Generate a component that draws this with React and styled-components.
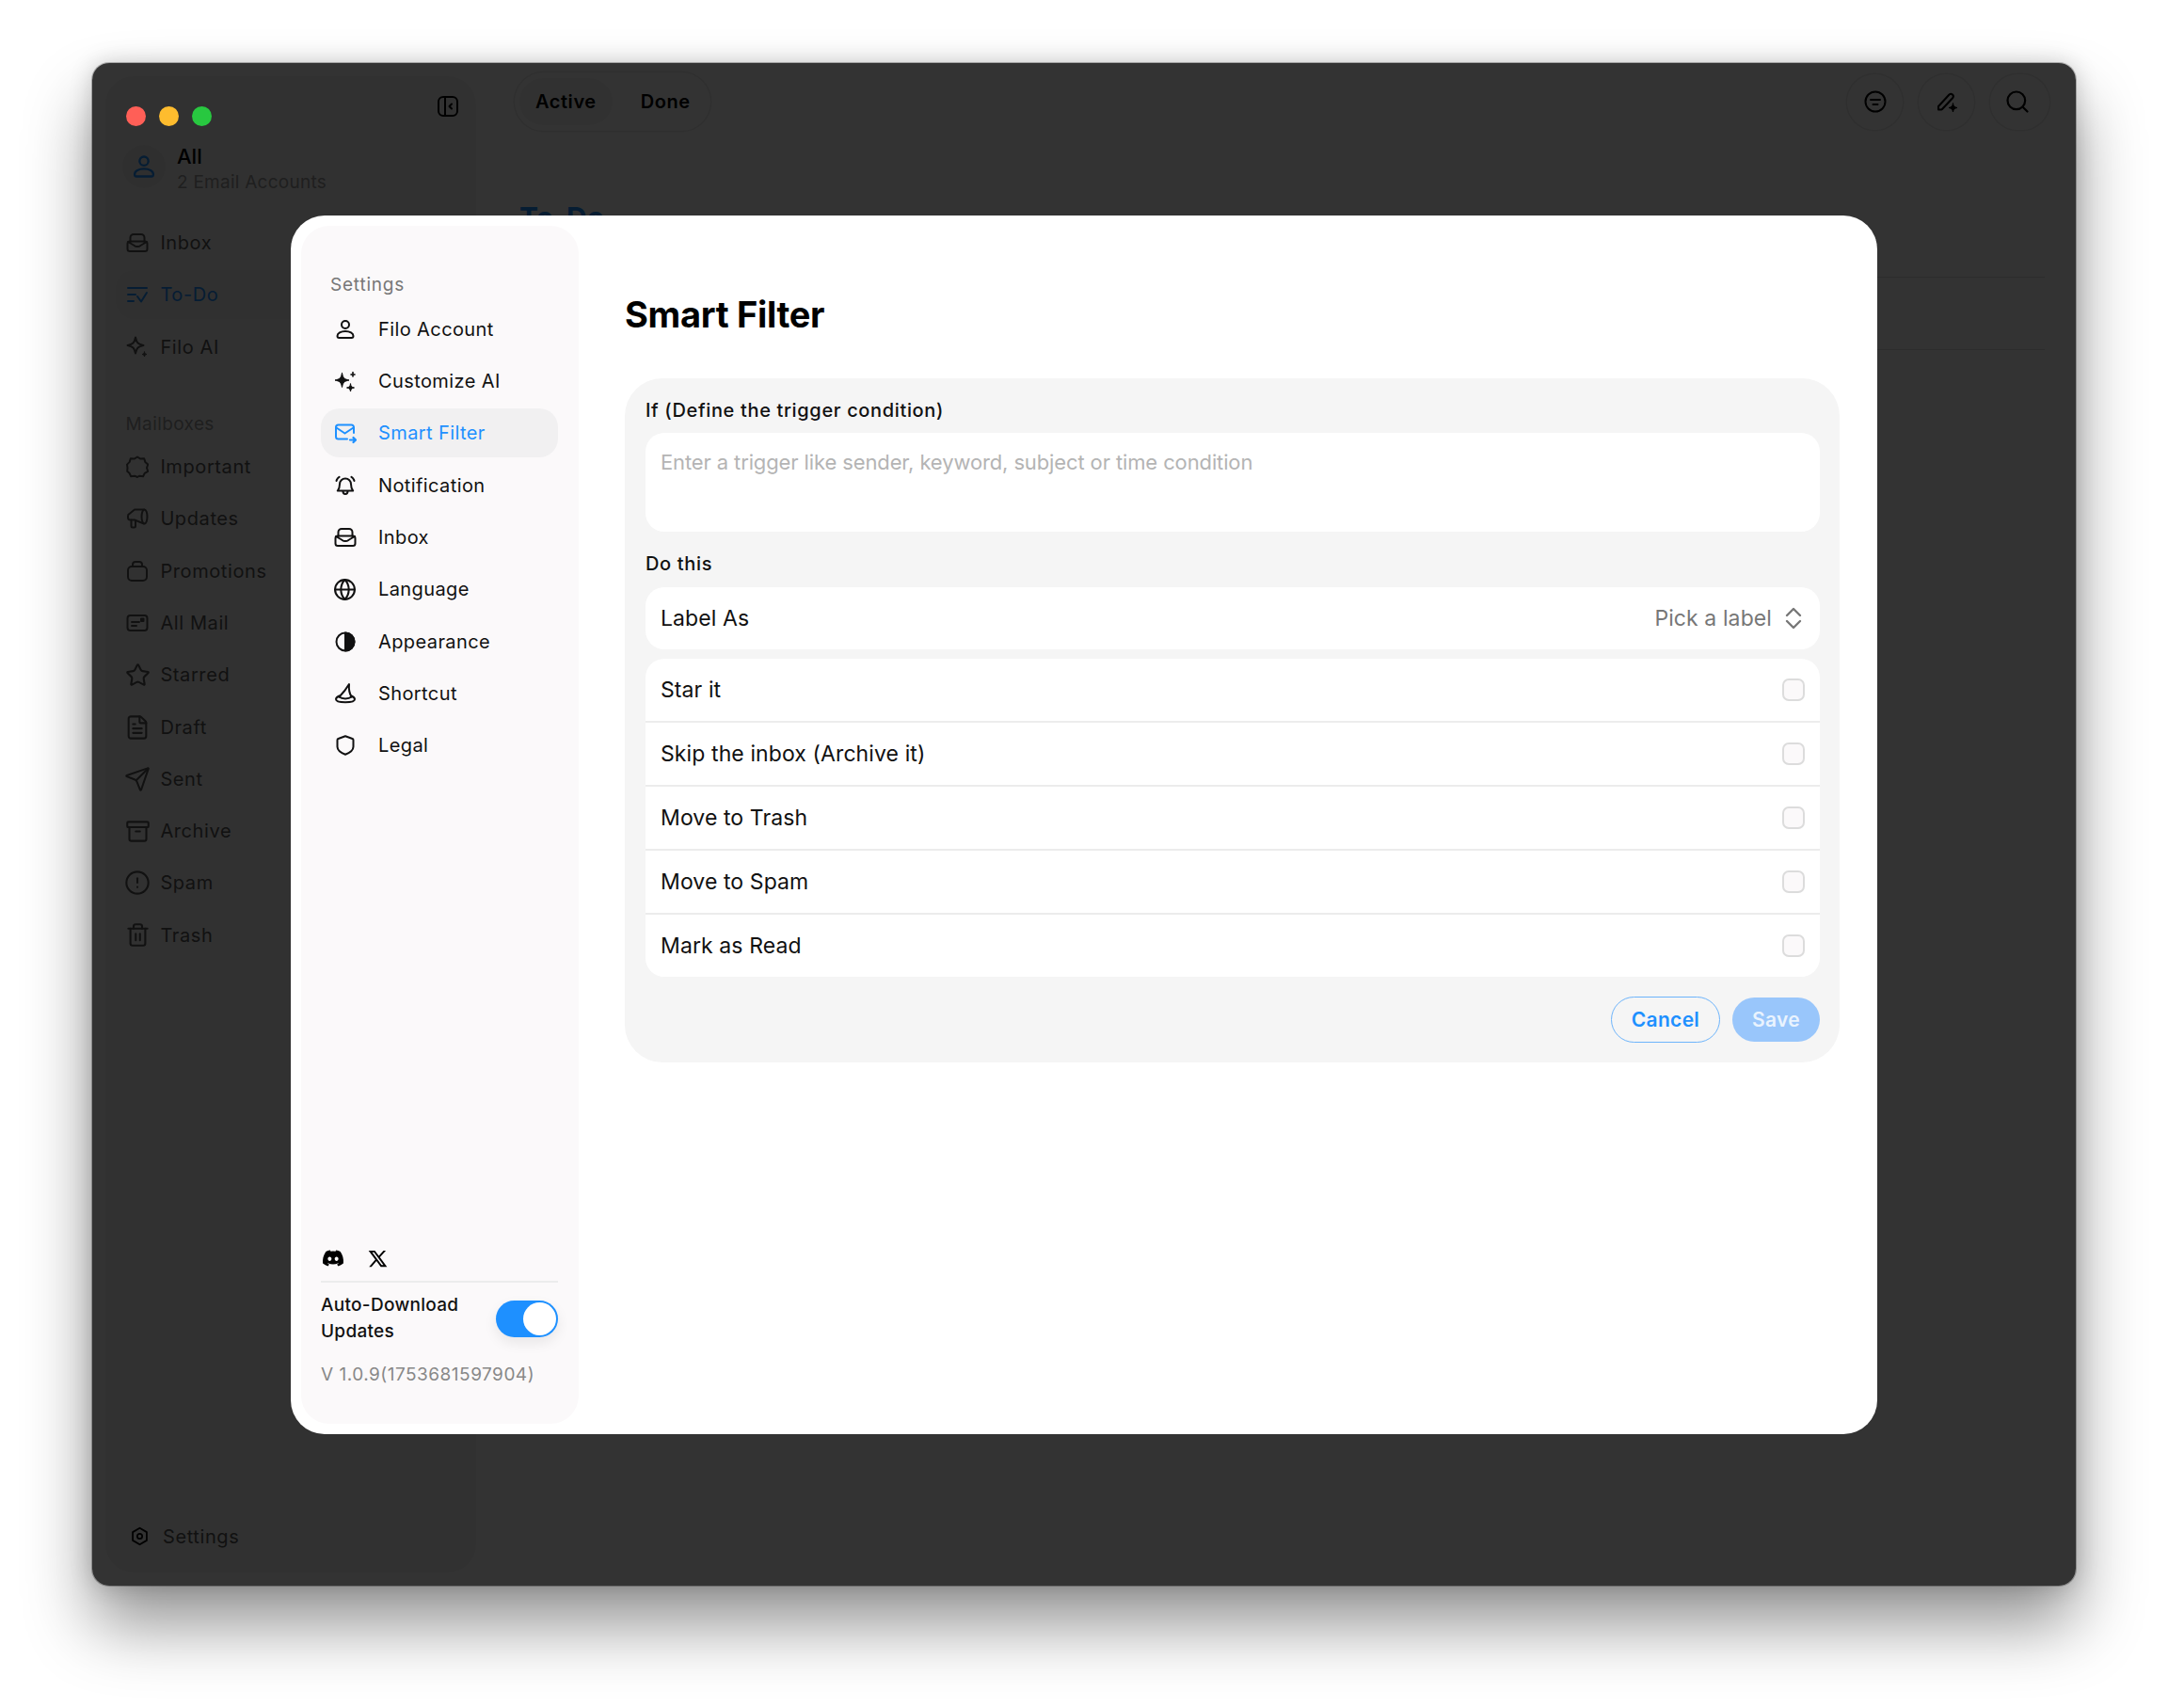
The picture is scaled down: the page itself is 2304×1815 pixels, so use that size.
import React from 'react';
import styled, { createGlobalStyle } from 'styled-components';
import { FaDiscord } from 'react-icons/fa6';
import { RiTwitterXLine } from 'react-icons/ri';
import { Star, FileText, Send, Archive, CircleAlert, Trash2, Search, Globe } from 'lucide-react';

const GlobalStyle = createGlobalStyle`
  html, body {
    margin: 0;
    padding: 0;
    background: #fff;
    font-family: Inter, 'Liberation Sans', sans-serif;
    -webkit-font-smoothing: antialiased;
  }
  * { box-sizing: border-box; }
`;

const Svg = ({ children, size = 24, fill = 'none', sw = 2 }) => (
  <svg width={size} height={size} viewBox="0 0 24 24" fill={fill} stroke="currentColor" strokeWidth={sw} strokeLinecap="round" strokeLinejoin="round">
    {children}
  </svg>
);

const star4 = (x, y, r) =>
  `M${x} ${y - r}C${x + r * 0.15} ${y - r * 0.3} ${x + r * 0.3} ${y - r * 0.15} ${x + r} ${y}C${x + r * 0.3} ${y + r * 0.15} ${x + r * 0.15} ${y + r * 0.3} ${x} ${y + r}C${x - r * 0.15} ${y + r * 0.3} ${x - r * 0.3} ${y + r * 0.15} ${x - r} ${y}C${x - r * 0.3} ${y - r * 0.15} ${x - r * 0.15} ${y - r * 0.3} ${x} ${y - r}Z`;

const PersonIcon = () => (
  <Svg>
    <circle cx="12" cy="7" r="4" />
    <path d="M3.500 19c0-3 3.800-5 8.500-5s8.500 2 8.500 5c0 1.200-.7 2-1.800 2H5.300C4.200 21 3.500 20.200 3.500 19z" />
  </Svg>
);
const SparkIcon = () => (
  <Svg sw={1} fill="currentColor">
    <path d={star4(8.5, 11, 7.5)} />
    <path d={star4(20, 5, 2.5)} />
    <path d={star4(17.5, 19, 4)} />
  </Svg>
);
const MailMoveIcon = () => (
  <Svg>
    <path d="M21 12V6a2.500 2.500 0 0 0-2.500-2.500h-14A2.500 2.500 0 0 0 2 6v10a2.500 2.500 0 0 0 2.500 2.500H14" />
    <path d="M2.500 6.500l9 6 9-6" />
    <path d="M17 19.500h6M20.500 17l2.500 2.500-2.500 2.500" strokeWidth="2.200" />
  </Svg>
);
const BellIcon = () => (
  <Svg>
    <path d="M12 4.500a6 6 0 0 0-6 6c0 4-1 5.500-2.200 7h16.400C19 16 18 14.500 18 10.500a6 6 0 0 0-6-6z" />
    <path d="M9.500 18c0 4 5 4 5 0" />
    <path d="M2.500 7c.5-2 1.500-3.300 3-4.200M21.500 7c-.5-2-1.500-3.300-3-4.200" />
  </Svg>
);
const InboxIcon = () => (
  <Svg>
    <path d="M4.500 11V6.500A3.500 3.500 0 0 1 8 3h8a3.500 3.500 0 0 1 3.500 3.500V11" />
    <rect x="1.500" y="10.500" width="21" height="10.500" rx="2.500" />
    <path d="M2 11l6 3.500c1 .6 1.500 1.500 4 1.500s3-.9 4-1.500l6-3.500" />
  </Svg>
);
const HalfIcon = () => (
  <Svg>
    <circle cx="12" cy="12" r="9.500" />
    <path d="M12 2.500a9.500 9.500 0 0 1 0 19z" fill="currentColor" />
  </Svg>
);
const HatIcon = () => (
  <Svg>
    <path d="M5.500 15.500C8 13 12.500 8 16 2c-.5 5 .5 10 2.500 13.500" />
    <path d="M5.500 14.500C3.500 15.500 2 16.700 2 18c0 2 4.500 3.200 10 3.200S22 20 22 18c0-1.300-1.500-2.500-3.500-3.500" />
    <path d="M5.500 15.500c3 2.500 10 2.500 13 0" />
  </Svg>
);
const ShieldIcon = () => (
  <Svg>
    <path d="M12 2.200l7.500 2.800c.6.200 1 .8 1 1.400v7.100c0 3.500-3.500 6.300-8.500 8.300-5-2-8.500-4.800-8.500-8.300V6.400c0-.6.400-1.200 1-1.400L12 2.200z" />
  </Svg>
);
const TodoIcon = () => (
  <Svg>
    <path d="M2 5h20M2 12h8M2 19h6" />
    <path d="M12 14l4 5.500L22 10" />
  </Svg>
);
const AiOutlineIcon = () => (
  <Svg>
    <path d={star4(10, 10, 8.5)} />
    <path d={star4(19.5, 19.5, 2.5)} fill="currentColor" strokeWidth="1" />
  </Svg>
);
const ImportantIcon = () => (
  <Svg>
    <path d="M12 1.500l3.300 2.100 3.900-.4 1.100 3.700 2.900 2.700-1.200 3.600 1.200 3.600-3.400 2-1.700 3.400-3.800-.5-2.300 1.300-3-1.300-3.800.5-1.700-3.400-2.300-2 .3-3.600L1 9.600l2.700-2.700 1.100-3.700 3.900.4L12 1.500z" />
  </Svg>
);
const MegaphoneIcon = () => (
  <Svg>
    <path d="M19 2.500H9L3.500 7A2.500 2.500 0 0 0 2 9.300V11a2.500 2.500 0 0 0 2.500 2.500H9L19 17.500" />
    <ellipse cx="19.500" cy="10" rx="3" ry="7.500" />
    <path d="M5.500 13.500v6.500a1.500 1.500 0 0 0 1.500 1.500h1.500A1.500 1.500 0 0 0 10 20v-6" />
  </Svg>
);
const BagIcon = () => (
  <Svg>
    <rect x="2" y="7" width="20" height="15" rx="4" />
    <path d="M7 7V5a3 3 0 0 1 3-3h4a3 3 0 0 1 3 3v2" />
  </Svg>
);
const AllMailIcon = () => (
  <Svg>
    <rect x="1.500" y="4" width="21" height="16" rx="3" />
    <path d="M6 11h8M6 15h5" />
    <rect x="16" y="7.500" width="2.500" height="2.500" fill="currentColor" />
  </Svg>
);
const CollapseIcon = () => (
  <Svg>
    <rect x="2" y="2" width="20" height="20" rx="5" />
    <path d="M9 2v20M16 9.500L13.500 12l2.500 2.500" />
  </Svg>
);
const FilterIcon = () => (
  <Svg>
    <circle cx="12" cy="12" r="10.500" />
    <path d="M7 10h10M9.500 15h5" />
  </Svg>
);
const ComposeIcon = () => (
  <Svg>
    <path d="M3 20.500V17L14.500 4.500a2.600 2.600 0 0 1 3.800 3.500L7 20a1.500 1.500 0 0 1-1 .5H3z" />
    <path d={star4(18.5, 18.5, 4.5)} fill="currentColor" strokeWidth="1" />
  </Svg>
);
const GearIcon = () => (
  <Svg>
    <path d="M12 2l8.500 5v10L12 22l-8.500-5V7L12 2z" />
    <circle cx="12" cy="12" r="3" />
  </Svg>
);
const UpDownIcon = () => (
  <Svg sw={2.4}>
    <path d="M5 9l7-7 7 7M5 15l7 7 7-7" />
  </Svg>
);

const topNav = [
  ['Inbox', <InboxIcon />],
  ['To-Do', <TodoIcon />, true],
  ['Filo AI', <AiOutlineIcon />],
];
const mailboxes = [
  ['Important', <ImportantIcon />],
  ['Updates', <MegaphoneIcon />],
  ['Promotions', <BagIcon />],
  ['All Mail', <AllMailIcon />],
  ['Starred', <Star size={27} strokeWidth={1.9} />],
  ['Draft', <FileText size={28} strokeWidth={1.8} />],
  ['Sent', <Send size={28} strokeWidth={1.8} />],
  ['Archive', <Archive size={27} strokeWidth={1.9} />],
  ['Spam', <CircleAlert size={28} strokeWidth={1.8} />],
  ['Trash', <Trash2 size={27} strokeWidth={1.9} />],
];
const settingsItems = [
  ['Filo Account', <PersonIcon />],
  ['Customize AI', <SparkIcon />],
  ['Smart Filter', <MailMoveIcon />, true],
  ['Notification', <BellIcon />],
  ['Inbox', <InboxIcon />],
  ['Language', <Globe size={25} strokeWidth={2} />],
  ['Appearance', <HalfIcon />],
  ['Shortcut', <HatIcon />],
  ['Legal', <ShieldIcon />],
];
const actions = ['Star it', 'Skip the inbox (Archive it)', 'Move to Trash', 'Move to Spam', 'Mark as Read'];

export default function App() {
  return (
    <>
      <GlobalStyle />
      <Page>
        <Window>
          <Lights>
            <Light $color="#ff5f57" />
            <Light $color="#febc2e" />
            <Light $color="#28c840" />
          </Lights>
          <AppSidebar>
            <CollapseRow>
              <CollapseIcon />
            </CollapseRow>
            <AccountRow>
              <Avatar>
                <PersonIcon />
              </Avatar>
              <AccountText>
                <AccountName>All</AccountName>
                <AccountSub>2 Email Accounts</AccountSub>
              </AccountText>
            </AccountRow>
            <NavList>
              {topNav.map(([label, icon, active]) => (
                <NavItem key={label} $active={active}>
                  <NavIcon>{icon}</NavIcon>
                  <span>{label}</span>
                </NavItem>
              ))}
            </NavList>
            <NavHeading>Mailboxes</NavHeading>
            <NavList>
              {mailboxes.map(([label, icon]) => (
                <NavItem key={label}>
                  <NavIcon>{icon}</NavIcon>
                  <span>{label}</span>
                </NavItem>
              ))}
            </NavList>
            <SidebarFoot>
              <GearIcon />
              <span>Settings</span>
            </SidebarFoot>
          </AppSidebar>
          <AppMain>
            <TopBar>
              <Tabs>
                <Tab $active>Active</Tab>
                <Tab>Done</Tab>
              </Tabs>
              <TopActions>
                <RoundButton><FilterIcon /></RoundButton>
                <RoundButton><ComposeIcon /></RoundButton>
                <RoundButton $wide><Search size={28} strokeWidth={1.9} /></RoundButton>
              </TopActions>
            </TopBar>
            <PageTitle>To-Do</PageTitle>
            <ListRule />
            <ListRule />
          </AppMain>

          <Overlay>
            <Modal>
              <SettingsNav>
                <SettingsHeading>Settings</SettingsHeading>
                {settingsItems.map(([label, icon, active]) => (
                  <SettingsItem key={label} $active={active}>
                    <SettingsIcon>{icon}</SettingsIcon>
                    <span>{label}</span>
                  </SettingsItem>
                ))}
                <SettingsBottom>
                  <SocialRow>
                    <FaDiscord size={24} />
                    <RiTwitterXLine size={23} />
                  </SocialRow>
                  <UpdateRow>
                    <UpdateLabel>Auto-Download Updates</UpdateLabel>
                    <Toggle><Thumb /></Toggle>
                  </UpdateRow>
                  <Version>V 1.0.9(1753681597904)</Version>
                </SettingsBottom>
              </SettingsNav>
              <Content>
                <ContentTitle>Smart Filter</ContentTitle>
                <FilterPanel>
                  <FieldLabel>If (Define the trigger condition)</FieldLabel>
                  <TriggerInput>Enter a trigger like sender, keyword, subject or time condition</TriggerInput>
                  <FieldLabel $second>Do this</FieldLabel>
                  <LabelRow>
                    <span>Label As</span>
                    <PickLabel>
                      Pick a label
                      <UpDownIcon />
                    </PickLabel>
                  </LabelRow>
                  <ActionGroup>
                    {actions.map(a => (
                      <ActionRow key={a}>
                        <span>{a}</span>
                        <CheckBox />
                      </ActionRow>
                    ))}
                  </ActionGroup>
                  <ButtonRow>
                    <CancelButton>Cancel</CancelButton>
                    <SaveButton>Save</SaveButton>
                  </ButtonRow>
                </FilterPanel>
              </Content>
            </Modal>
          </Overlay>
        </Window>
      </Page>
    </>
  );
}

const Page = styled.div`
  width: 2304px;
  height: 1815px;
  padding: 67px 98px 0;
  overflow: hidden;
`;
const Window = styled.div`
  position: relative;
  width: 2108px;
  height: 1618px;
  border-radius: 18px;
  background: #fff;
  display: flex;
  overflow: visible;
  box-shadow: 0 0 0 1px rgba(0, 0, 0, 0.25), 0 42px 70px rgba(0, 0, 0, 0.42), 0 0 24px rgba(0, 0, 0, 0.18);
`;
const Lights = styled.div`
  position: absolute;
  z-index: 3;
  left: 36px;
  top: 46px;
  display: flex;
  gap: 14px;
`;
const Light = styled.div`
  width: 21px;
  height: 21px;
  border-radius: 50%;
  background: ${p => p.$color};
`;
const AppSidebar = styled.aside`
  width: 394px;
  margin: 14px 0 14px 14px;
  border-radius: 30px;
  background: #f6f6f6;
  padding: 20px 11px 0;
  display: flex;
  flex-direction: column;
  color: #333;
`;
const CollapseRow = styled.div`
  height: 26px;
  display: flex;
  justify-content: flex-end;
  padding-right: 7px;
  color: #000;
`;
const AccountRow = styled.div`
  margin-top: 19px;
  height: 62px;
  display: flex;
  align-items: center;
  gap: 12px;
  padding-left: 7px;
`;
const Avatar = styled.div`
  width: 46px;
  height: 46px;
  border-radius: 50%;
  background: #ebebeb;
  color: #1e90ff;
  display: flex;
  align-items: center;
  justify-content: center;
  & > svg {
    width: 28px;
    height: 28px;
  }
`;
const AccountText = styled.div`
  display: flex;
  flex-direction: column;
  margin-top: 6px;
`;
const AccountName = styled.div`
  font-size: 22px;
  line-height: 27px;
  font-weight: 500;
  color: #000;
`;
const AccountSub = styled.div`
  font-size: 19px;
  line-height: 27px;
  color: #999;
  letter-spacing: 0.25px;
`;
const NavList = styled.div`
  display: flex;
  flex-direction: column;
  gap: 3.3px;
  margin-top: 24px;
`;
const NavItem = styled.div`
  height: 52px;
  border-radius: 20px;
  display: flex;
  align-items: center;
  gap: 12.4px;
  padding-left: 11px;
  font-size: 20px;
  letter-spacing: 0.6px;
  color: ${p => (p.$active ? '#1e90ff' : '#555')};
  background: ${p => (p.$active ? '#eee' : 'transparent')};
`;
const NavIcon = styled.span`
  width: 24px;
  height: 24px;
  flex: none;
  display: flex;
  align-items: center;
  justify-content: center;
  color: inherit;
  & > svg {
    flex: none;
    display: block;
  }
`;
const NavHeading = styled.div`
  margin-top: 44px;
  margin-bottom: -16.5px;
  padding-left: 10.5px;
  font-size: 19px;
  line-height: 24px;
  color: #999;
  letter-spacing: 0.4px;
`;
const SidebarFoot = styled.div`
  margin-top: auto;
  height: 68px;
  padding: 0 0 9px 14.5px;
  display: flex;
  align-items: center;
  gap: 14.5px;
  font-size: 20px;
  letter-spacing: 0.6px;
  color: #555;
  & > svg {
    width: 21px;
    height: 21px;
    color: #000;
  }
`;
const AppMain = styled.main`
  flex: 1;
  padding: 10px 28px 0 41px;
  display: flex;
  flex-direction: column;
`;
const TopBar = styled.div`
  display: flex;
  justify-content: space-between;
  align-items: center;
`;
const Tabs = styled.div`
  display: flex;
  align-items: center;
  width: 208px;
  height: 62px;
  border-radius: 31px;
  background: #fff;
  box-shadow: 0 0 0 1.5px #eaeaea;
  padding: 0 5px;
  gap: 13px;
`;
const Tab = styled.div`
  height: 50px;
  padding: 0 17px;
  border-radius: 25px;
  display: flex;
  align-items: center;
  font-size: 20px;
  font-weight: 600;
  letter-spacing: 0.55px;
  color: #000;
  background: ${p => (p.$active ? '#f6f6f6' : 'transparent')};
`;
const TopActions = styled.div`
  display: flex;
  align-items: center;
  gap: 17px;
`;
const RoundButton = styled.div`
  width: ${p => (p.$wide ? '63px' : '59px')};
  height: 59px;
  border-radius: 30px;
  box-shadow: 0 0 0 1.5px #eaeaea;
  padding-right: ${p => (p.$wide ? '5px' : '0')};
  color: #000;
  display: flex;
  align-items: center;
  justify-content: center;
`;
const PageTitle = styled.h1`
  margin: 69px 0 0 5px;
  font-size: 30px;
  line-height: 46px;
  font-weight: 700;
  color: #1e90ff;
`;
const ListRule = styled.div`
  margin-top: 40px;
  margin-right: 5px;
  height: 1px;
  background: #ddd;
  &:last-child {
    margin-top: 76px;
  }
`;
const Overlay = styled.div`
  position: absolute;
  inset: 0;
  z-index: 2;
  border-radius: 18px;
  background: rgba(0, 0, 0, 0.8);
  display: flex;
  align-items: center;
  justify-content: center;
`;
const Modal = styled.div`
  width: 1686px;
  height: 1295px;
  border-radius: 36px;
  background: #fff;
  padding: 11px;
  display: flex;
`;
const SettingsNav = styled.nav`
  width: 295px;
  flex: none;
  border-radius: 30px;
  background: #fbf9fa;
  padding: 50px 22px 39px 21px;
  display: flex;
  flex-direction: column;
  gap: 3.3px;
`;
const SettingsHeading = styled.div`
  padding-left: 10px;
  margin-bottom: 5px;
  font-size: 19px;
  line-height: 26px;
  font-weight: 400;
  letter-spacing: 0.8px;
  color: #777;
`;
const SettingsItem = styled.div`
  height: 52px;
  border-radius: 20px;
  display: flex;
  align-items: center;
  font-size: 20px;
  letter-spacing: 0.4px;
  color: ${p => (p.$active ? '#1e90ff' : '#111')};
  background: ${p => (p.$active ? '#f1f0f1' : 'transparent')};
`;
const SettingsIcon = styled.span`
  width: 61px;
  flex: none;
  display: flex;
  justify-content: center;
  padding-right: 10px;
  & > svg {
    display: block;
  }
`;
const SettingsBottom = styled.div`
  margin-top: auto;
  display: flex;
  flex-direction: column;
`;
const SocialRow = styled.div`
  display: flex;
  align-items: center;
  gap: 24px;
  height: 34px;
  margin-bottom: 7px;
  padding-left: 1px;
  color: #000;
`;
const UpdateRow = styled.div`
  border-top: 2px solid #ececec;
  padding-top: 10px;
  display: flex;
  align-items: center;
  justify-content: space-between;
`;
const UpdateLabel = styled.div`
  width: 170px;
  font-size: 19px;
  line-height: 28px;
  font-weight: 500;
  letter-spacing: 0.3px;
  color: #111;
`;
const Toggle = styled.div`
  position: relative;
  width: 66px;
  height: 39px;
  border-radius: 20px;
  background: #1e90ff;
  box-shadow: 0 6px 14px rgba(0, 0, 0, 0.08);
`;
const Thumb = styled.div`
  position: absolute;
  right: 2px;
  top: 2px;
  width: 35px;
  height: 35px;
  border-radius: 50%;
  background: #fff;
`;
const Version = styled.div`
  margin-top: 18.5px;
  font-size: 19px;
  line-height: 26px;
  letter-spacing: 0.5px;
  color: #888;
`;
const Content = styled.section`
  flex: 1;
  padding: 0 29px 0 49px;
`;
const ContentTitle = styled.h2`
  margin: 71px 0 0;
  font-size: 38px;
  line-height: 46px;
  font-weight: 700;
  letter-spacing: -0.3px;
  color: #000;
`;
const FilterPanel = styled.div`
  margin-top: 45px;
  border-radius: 40px;
  background: #f5f5f5;
  padding: 20px 21px 21px 22px;
  display: flex;
  flex-direction: column;
`;
const FieldLabel = styled.div`
  font-size: 20px;
  line-height: 28px;
  font-weight: 500;
  letter-spacing: 0.65px;
  color: #111;
  margin-top: ${p => (p.$second ? '20px' : '0')};
  margin-bottom: ${p => (p.$second ? '11px' : '10px')};
`;
const TriggerInput = styled.div`
  height: 105px;
  border-radius: 20px;
  background: #fff;
  padding: 17px 16px;
  font-size: 22px;
  line-height: 28px;
  letter-spacing: -0.12px;
  color: #b4b4b4;
`;
const LabelRow = styled.div`
  height: 66px;
  border-radius: 20px;
  background: #fff;
  padding: 0 16px;
  display: flex;
  align-items: center;
  justify-content: space-between;
  font-size: 23px;
  letter-spacing: 0.1px;
  color: #111;
`;
const PickLabel = styled.div`
  display: flex;
  align-items: center;
  gap: 11px;
  color: #777;
`;
const ActionGroup = styled.div`
  margin-top: 10px;
  border-radius: 20px;
  background: #fff;
  overflow: hidden;
`;
const ActionRow = styled.div`
  height: 68px;
  padding: 0 16px;
  display: flex;
  align-items: center;
  justify-content: space-between;
  border-bottom: 2px solid #ececec;
  font-size: 23px;
  letter-spacing: 0.1px;
  color: #111;
  &:last-child {
    height: 66px;
    border-bottom: 0;
  }
`;
const CheckBox = styled.div`
  width: 24px;
  height: 24px;
  border-radius: 7px;
  border: 2px solid #dcdcdc;
  background: #fbf9fa;
`;
const ButtonRow = styled.div`
  margin-top: 21px;
  display: flex;
  justify-content: flex-end;
  align-items: center;
  gap: 13px;
`;
const CancelButton = styled.div`
  width: 116px;
  height: 49px;
  border-radius: 25px;
  border: 1.5px solid #6db4fb;
  display: flex;
  align-items: center;
  justify-content: center;
  font-size: 21px;
  font-weight: 600;
  letter-spacing: 0.3px;
  color: #1e90ff;
`;
const SaveButton = styled.div`
  width: 93px;
  height: 47px;
  border-radius: 24px;
  background: #99c6fb;
  display: flex;
  align-items: center;
  justify-content: center;
  font-size: 21px;
  font-weight: 600;
  letter-spacing: 0.3px;
  color: #e9f3fe;
`;
